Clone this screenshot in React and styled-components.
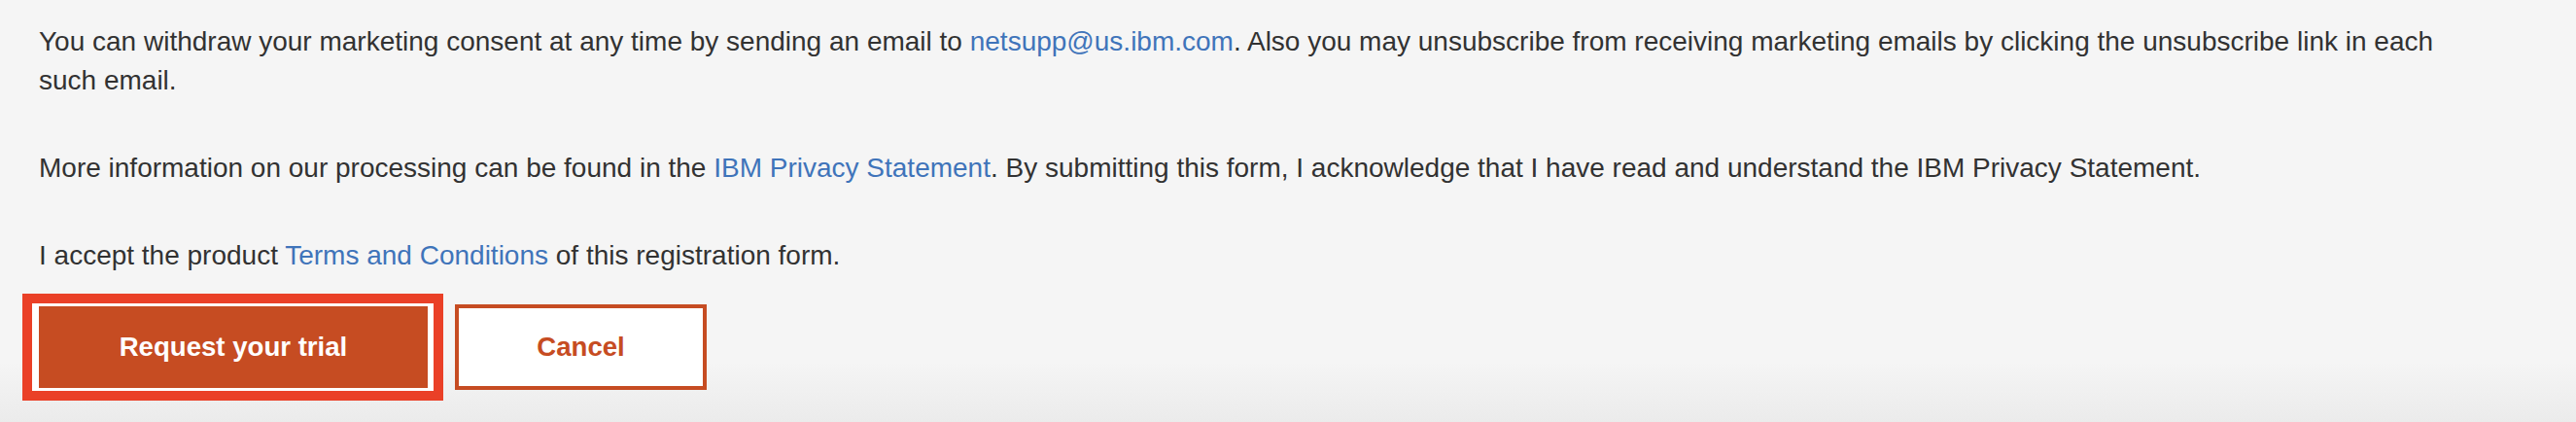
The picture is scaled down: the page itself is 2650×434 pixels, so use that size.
import styled, { createGlobalStyle } from "styled-components";

const GlobalStyle = createGlobalStyle`
  html, body {
    margin: 0;
    padding: 0;
  }
  body {
    min-height: 434px;
    background: linear-gradient(to bottom, #f5f5f5 0, #f5f5f5 372px, #ebebeb 434px);
    font-family: "Liberation Sans", Arial, sans-serif;
    color: #323232;
  }
`;

const Form = styled.form`
  padding: 23px 0 0 33px;
`;

const Text = styled.p`
  max-width: 2525px;
  margin: 0 0 50px;
  padding-left: 7px;
  font-size: 28px;
  line-height: 40px;

  &:last-of-type {
    margin-bottom: 29px;
  }
`;

const TextLink = styled.a`
  color: #3f74ba;
  text-decoration: none;
`;

const Actions = styled.div`
  display: flex;
  align-items: center;
  gap: 22px;
`;

const Button = styled.button`
  box-sizing: border-box;
  display: flex;
  align-items: center;
  justify-content: center;
  height: ${(p) => (p.$primary ? "90px" : "88px")};
  width: ${(p) => (p.$primary ? "413px" : "259px")};
  padding: 0;
  font-family: "Liberation Sans", Arial, sans-serif;
  font-size: 27.6px;
  font-weight: 700;
  cursor: pointer;
  background: ${(p) => (p.$primary ? "#c64c22" : "#ffffff")};
  color: ${(p) => (p.$primary ? "#ffffff" : "#c64c22")};
  border-style: solid;
  border-color: ${(p) => (p.$primary ? "#ffffff" : "#c64c22")};
  border-width: ${(p) => (p.$primary ? "3px 6px 3px 7px" : "4px")};
  outline: ${(p) => (p.$primary ? "10px solid #ea4027" : "none")};
`;

export default function App() {
  return (
    <>
      <GlobalStyle />
      <Form onSubmit={(e) => e.preventDefault()}>
        <Text>
          You can withdraw your marketing consent at any time by sending an
          email to <TextLink href="#">netsupp@us.ibm.com</TextLink>. Also you
          may unsubscribe from receiving marketing emails by clicking the
          unsubscribe link in each such email.
        </Text>
        <Text>
          More information on our processing can be found in the{" "}
          <TextLink href="#">IBM Privacy Statement</TextLink>. By submitting
          this form, I acknowledge that I have read and understand the IBM
          Privacy Statement.
        </Text>
        <Text>
          I accept the product <TextLink href="#">Terms and Conditions</TextLink>{" "}
          of this registration form.
        </Text>
        <Actions>
          <Button type="submit" $primary>
            Request your trial
          </Button>
          <Button type="button">Cancel</Button>
        </Actions>
      </Form>
    </>
  );
}
